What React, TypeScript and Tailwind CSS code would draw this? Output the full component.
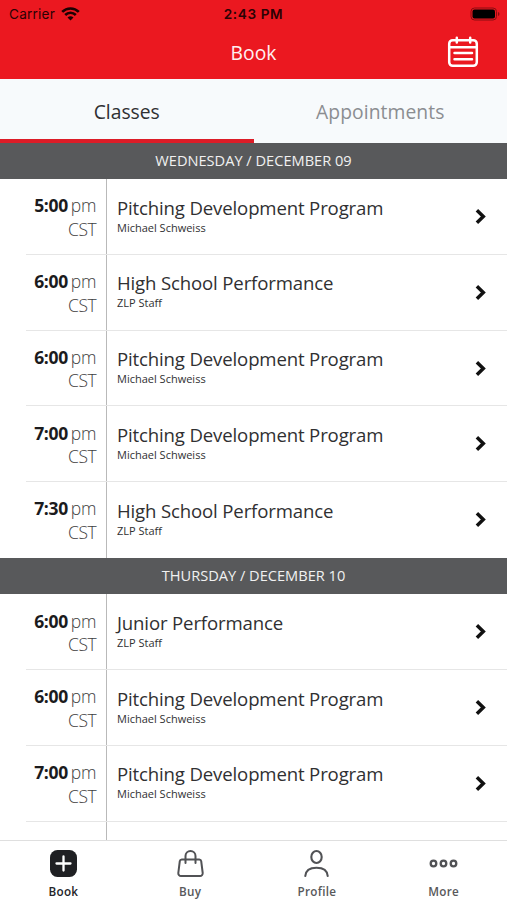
import React from 'react';

type ClassItem = { time: string; title: string; staff: string };

const days: { label: string; classes: ClassItem[] }[] = [
  {
    label: 'WEDNESDAY / DECEMBER 09',
    classes: [
      { time: '5:00', title: 'Pitching Development Program', staff: 'Michael Schweiss' },
      { time: '6:00', title: 'High School Performance', staff: 'ZLP Staff' },
      { time: '6:00', title: 'Pitching Development Program', staff: 'Michael Schweiss' },
      { time: '7:00', title: 'Pitching Development Program', staff: 'Michael Schweiss' },
      { time: '7:30', title: 'High School Performance', staff: 'ZLP Staff' },
    ],
  },
  {
    label: 'THURSDAY / DECEMBER 10',
    classes: [
      { time: '6:00', title: 'Junior Performance', staff: 'ZLP Staff' },
      { time: '6:00', title: 'Pitching Development Program', staff: 'Michael Schweiss' },
      { time: '7:00', title: 'Pitching Development Program', staff: 'Michael Schweiss' },
    ],
  },
];

const ClassRow: React.FC<{ item: ClassItem; last: boolean }> = ({ item, last }) => (
  <div className="relative flex h-[75.75px]">
    <div className="w-[107px] shrink-0 border-r border-[#b9b9b9] pt-[15.4px] pr-[9.7px] text-right text-[17.5px] leading-[23.5px] font-light whitespace-nowrap text-[#3e3e40]">
      <div>
        <span className="font-bold tracking-[-0.35px] text-[#1b1b1d]">{item.time}</span>
        <span className="ml-[3px] tracking-[-0.2px]">pm</span>
      </div>
      <div className="tracking-[-0.4px]">CST</div>
    </div>
    <div className="flex-1 pt-[15.5px] pl-[10px] text-[#303032]">
      <h3 className="text-[18.6px] leading-[26px] tracking-[-0.15px]">{item.title}</h3>
      <p className="text-[11px] leading-[14px]">{item.staff}</p>
    </div>
    <svg className="mt-[29px] mr-[20px] h-[17px] w-[13px]" viewBox="0 0 13 17" fill="none" stroke="#111" strokeWidth="3.5">
      <path d="M2.9 2.2 9.3 8.5 2.9 14.8" />
    </svg>
    {!last && <div className="absolute right-0 bottom-0 left-[26px] h-px bg-[#e6e6e6]" />}
  </div>
);

const BookPage: React.FC = () => {
  return (
    <div className="flex h-[900px] w-[507px] flex-col overflow-hidden bg-white font-['Open_Sans',sans-serif]">
      {/* Status bar and title */}
      <header className="h-[79px] shrink-0 bg-[#eb1820]">
        <div className="grid h-[27px] grid-cols-3 items-center px-[9px] font-['Inter',sans-serif] text-[13.6px] text-[#2b0204]">
          <div className="flex items-center gap-[6px] pt-px">
            <span className="tracking-[0.2px]">Carrier</span>
            <svg className="h-[14px] w-[19px]" viewBox="0 0 19 14" fill="none" stroke="#1c0102" strokeWidth="2.6">
              <path d="M1.2 4.9a11.8 11.8 0 0 1 16.6 0M4.2 8a7.5 7.5 0 0 1 10.6 0" />
              <path d="M9.5 13.6 6.5 10.6a4.3 4.3 0 0 1 6 0Z" fill="#1c0102" stroke="none" />
            </svg>
          </div>
          <span className="pt-px text-center font-semibold tracking-[0.6px]">2:43 PM</span>
          <svg className="mr-[-2px] h-[14px] w-[30px] justify-self-end" viewBox="0 0 30 14">
            <rect x="1" y="1" width="25.5" height="12" rx="3.5" fill="none" stroke="#8a0c10" />
            <rect x="2.5" y="2.5" width="22.5" height="9" rx="2" fill="#000" />
            <path d="M28 5v4q1.5-.6 1.5-2T28 5Z" fill="#8a0c10" />
          </svg>
        </div>
        <div className="grid h-[50px] grid-cols-3 items-center">
          <h1 className="col-start-2 pt-[2px] text-center text-[19.3px] leading-[26px] text-[#fff0f0]">Book</h1>
          <svg className="mr-[28px] h-[32px] w-[32px] justify-self-end" viewBox="0 0 32 32" fill="none" stroke="#fff" strokeWidth="2.5" strokeLinecap="round">
            <rect x="2.2" y="4.2" width="27.6" height="25.6" rx="3.5" />
            <path d="M2.2 11.2h27.6M9.8 1.8v4.6M23.2 1.8v4.6M7.5 17h17.5M7.5 23.2h17.5" />
          </svg>
        </div>
      </header>

      <nav className="grid h-[63.5px] shrink-0 grid-cols-2 bg-[#f7fafc] text-center text-[19.3px] leading-[26px]">
        <div className="border-b-4 border-[#dc1c27] pt-[20px] text-[#2f3033]">Classes</div>
        <div className="pt-[20px] tracking-[0.08px] text-[#8b8d91]">Appointments</div>
      </nav>

      {/* Schedule */}
      <main className="min-h-0 flex-1 overflow-hidden">
        {days.map((day) => (
          <section key={day.label}>
            <h2 className="h-[36.5px] bg-[#58595b] text-center text-[14.6px] leading-[35.5px] text-[#f1f1f1]">{day.label}</h2>
            {day.classes.map((item, index) => (
              <ClassRow key={index} item={item} last={day.classes.length === 5 && index === 4} />
            ))}
          </section>
        ))}
        <div className="h-[30px] w-[107px] border-r border-[#b9b9b9]" />
      </main>

      {/* Bottom tabs */}
      <footer className="grid h-[60.5px] shrink-0 grid-cols-4 border-t border-[#dfdfdf] bg-white pt-[8px] text-center text-[11.7px] leading-[16px] font-semibold tracking-[0.3px] text-[#58595b]">
        <div className="flex flex-col items-center gap-[5px] text-[#242528]">
          <svg className="h-[29px] w-[29px]" viewBox="0 0 29 29">
            <rect x="1" y="1" width="27" height="27" rx="7.5" fill="#1f2023" />
            <path d="M14.5 7.5v14M7.5 14.5h14" stroke="#fff" strokeWidth="2.3" strokeLinecap="round" />
          </svg>
          <span>Book</span>
        </div>
        <div className="flex flex-col items-center gap-[5px]">
          <svg className="h-[29px] w-[29px]" viewBox="0 0 29 29" fill="none" stroke="#515255" strokeWidth="2" strokeLinecap="round" strokeLinejoin="round">
            <path d="M5.8 10.5h17.4a2 2 0 0 1 2 1.7l1.5 11.8a2.7 2.7 0 0 1-2.7 3H5a2.7 2.7 0 0 1-2.7-3l1.5-11.8a2 2 0 0 1 2-1.7Z" />
            <path d="M9.5 14V7a5 5 0 0 1 10 0v7" />
          </svg>
          <span>Buy</span>
        </div>
        <div className="flex flex-col items-center gap-[5px]">
          <svg className="h-[29px] w-[29px]" viewBox="0 0 29 29" fill="none" stroke="#515255" strokeWidth="2.1" strokeLinecap="round">
            <ellipse cx="14.5" cy="8" rx="5.2" ry="6" />
            <path d="M3.3 27c.4-5.5 4.6-8.3 11.2-8.3S25.3 21.5 25.7 27" />
          </svg>
          <span>Profile</span>
        </div>
        <div className="flex flex-col items-center gap-[5px]">
          <svg className="h-[29px] w-[29px]" viewBox="0 0 29 29" fill="none" stroke="#515255" strokeWidth="2.3">
            <circle cx="4.5" cy="14.5" r="2.8" />
            <circle cx="14.5" cy="14.5" r="2.8" />
            <circle cx="24.5" cy="14.5" r="2.8" />
          </svg>
          <span>More</span>
        </div>
      </footer>
    </div>
  );
};

export default BookPage;
